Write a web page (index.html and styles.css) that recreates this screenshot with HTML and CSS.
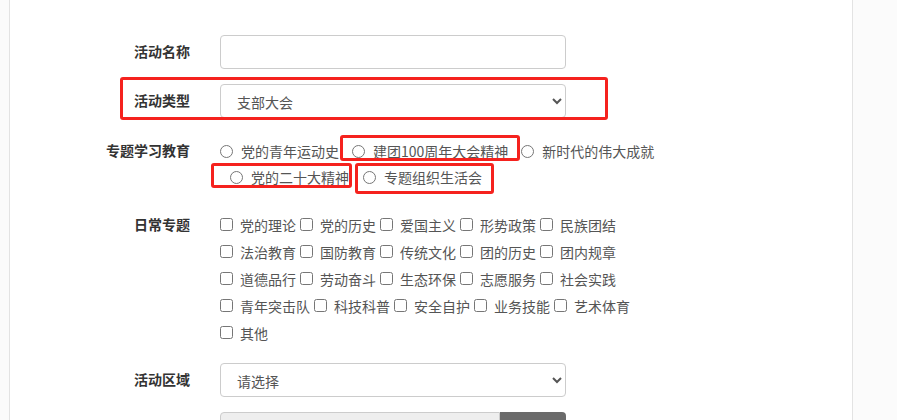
FILE: index.html
```html
<!DOCTYPE html>
<html lang="zh-CN">
<head>
<meta charset="utf-8">
<title>活动</title>
<link rel="stylesheet" href="styles.css">
</head>
<body>
<div class="page">
  <form class="form">
    <div class="row row-input">
      <label class="lbl">活动名称</label>
      <div class="ctl"><input class="field" type="text"></div>
    </div>
    <div class="row row-input">
      <label class="lbl">活动类型</label>
      <div class="ctl">
        <select class="field select">
          <option>支部大会</option>
        </select>
      </div>
    </div>
    <div class="row row-radio">
      <label class="lbl lbl-line">专题学习教育</label>
      <div class="ctl choices">
        <div class="line">
          <label class="opt"><input type="radio" name="zt"><span>党的青年运动史</span></label>
          <label class="opt"><input type="radio" name="zt"><span>建团100周年大会精神</span></label>
          <label class="opt"><input type="radio" name="zt"><span>新时代的伟大成就</span></label>
        </div>
        <div class="line line-indent">
          <label class="opt"><input type="radio" name="zt"><span>党的二十大精神</span></label>
          <label class="opt"><input type="radio" name="zt"><span>专题组织生活会</span></label>
        </div>
      </div>
    </div>
    <div class="row row-check">
      <label class="lbl lbl-check">日常专题</label>
      <div class="ctl checks">
        <div class="cline">
          <label class="chk"><input type="checkbox"><span>党的理论</span></label>
          <label class="chk"><input type="checkbox"><span>党的历史</span></label>
          <label class="chk"><input type="checkbox"><span>爱国主义</span></label>
          <label class="chk"><input type="checkbox"><span>形势政策</span></label>
          <label class="chk"><input type="checkbox"><span>民族团结</span></label>
        </div>
        <div class="cline">
          <label class="chk"><input type="checkbox"><span>法治教育</span></label>
          <label class="chk"><input type="checkbox"><span>国防教育</span></label>
          <label class="chk"><input type="checkbox"><span>传统文化</span></label>
          <label class="chk"><input type="checkbox"><span>团的历史</span></label>
          <label class="chk"><input type="checkbox"><span>团内规章</span></label>
        </div>
        <div class="cline">
          <label class="chk"><input type="checkbox"><span>道德品行</span></label>
          <label class="chk"><input type="checkbox"><span>劳动奋斗</span></label>
          <label class="chk"><input type="checkbox"><span>生态环保</span></label>
          <label class="chk"><input type="checkbox"><span>志愿服务</span></label>
          <label class="chk"><input type="checkbox"><span>社会实践</span></label>
        </div>
        <div class="cline">
          <label class="chk"><input type="checkbox"><span>青年突击队</span></label>
          <label class="chk"><input type="checkbox"><span>科技科普</span></label>
          <label class="chk"><input type="checkbox"><span>安全自护</span></label>
          <label class="chk"><input type="checkbox"><span>业务技能</span></label>
          <label class="chk"><input type="checkbox"><span>艺术体育</span></label>
        </div>
        <div class="cline">
          <label class="chk"><input type="checkbox"><span>其他</span></label>
        </div>
      </div>
    </div>
    <div class="row row-input row-area">
      <label class="lbl">活动区域</label>
      <div class="ctl">
        <select class="field select">
          <option>请选择</option>
        </select>
      </div>
    </div>
    <div class="row row-input">
      <span class="lbl"></span>
      <div class="ctl group">
        <input class="field field-ro" type="text" readonly>
        <button type="button" class="group-btn" aria-label="选择"></button>
      </div>
    </div>
  </form>
</div>

<div class="mark mark-1"></div>
<div class="mark mark-2"></div>
<div class="mark mark-3"></div>
<div class="mark mark-4"></div>
</body>
</html>
```

FILE: styles.css
```css
* { box-sizing: border-box; }

html, body {
  margin: 0;
  height: 100%;
  overflow: hidden;
}

body {
  background: #fbfbfb;
  font-family: "Noto Sans CJK SC", "Noto Sans", sans-serif;
  font-size: 14px;
  color: #555;
}

.page {
  margin-left: 9px;
  width: 844px;
  height: 420px;
  background: #fff;
  border-left: 1px solid #e3e3e3;
  border-right: 1px solid #e3e3e3;
  padding-top: 35px;
  overflow: hidden;
}

.form {
  display: flex;
  flex-direction: column;
}

.row {
  display: flex;
  align-items: flex-start;
}

.row-input { margin-bottom: 15px; }
.row-input .lbl { line-height: 33px; }

.lbl {
  width: 180px;
  margin-right: 30px;
  text-align: right;
  font-weight: bold;
  color: #333;
  flex: none;
}

.ctl { flex: none; width: 346px; }

.field {
  display: block;
  width: 346px;
  height: 34px;
  border: 1px solid #ccc;
  border-radius: 4px;
  background: #fff;
  padding: 6px 12px;
  font-family: inherit;
  font-size: 14px;
  color: #555;
}

.select { padding-left: 12px; }

/* radio group */
.row-radio { margin-top: 5px; }
.lbl-line { line-height: 25px; }
.choices { width: 460px; }

.line {
  display: flex;
  align-items: center;
  height: 26px;
  gap: 13px;
}
.line-indent { padding-left: 10px; gap: 14px; }

.opt {
  display: inline-flex;
  align-items: center;
  line-height: 26px;
  white-space: nowrap;
}
.opt input {
  margin: 0 8px 0 0;
  width: 13px;
  height: 13px;
}

/* checkbox group */
.row-check { margin-top: 21px; }
.lbl-check { line-height: 26px; }
.checks { width: 460px; }

.cline {
  display: flex;
  align-items: center;
  height: 27px;
  gap: 4px;
}

.chk {
  display: inline-flex;
  align-items: center;
  white-space: nowrap;
}
.chk input {
  margin: 0 7px 0 0;
  width: 13px;
  height: 13px;
}

.row-area { margin-top: 17px; }

/* input group */
.group { display: flex; }
.field-ro {
  width: 280px;
  background: #eee;
  border-radius: 4px 0 0 4px;
}
.group-btn {
  width: 66px;
  height: 34px;
  border: none;
  background: #6b6b6b;
  border-radius: 0 4px 4px 0;
}

/* red annotation boxes */
.mark {
  position: absolute;
  border: 3px solid #f5221e;
  border-radius: 3px;
}
.mark-1 { left: 120px; top: 77px; width: 488px; height: 43px; }
.mark-2 { left: 340px; top: 135px; width: 180px; height: 26px; }
.mark-3 { left: 211px; top: 163px; width: 141px; height: 25px; }
.mark-4 { left: 355px; top: 163px; width: 139px; height: 31px; }
```
